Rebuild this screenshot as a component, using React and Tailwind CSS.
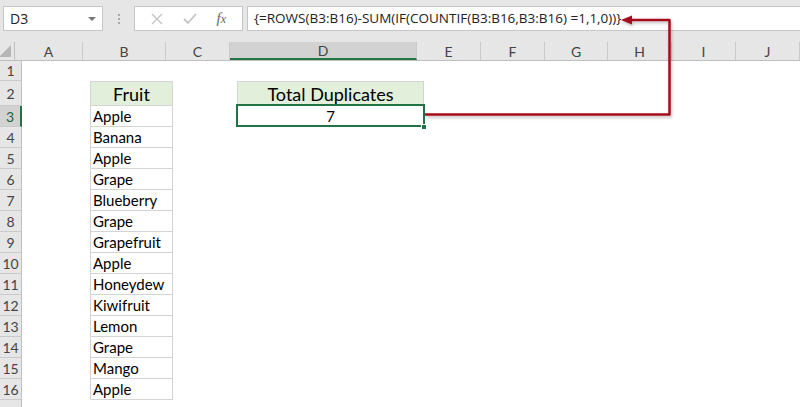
import React from 'react';

const colWidths = ['w-[68px]', 'w-[83px]', 'w-[64px]', 'w-[187px]', 'w-[64px]', 'w-[64px]', 'w-[63px]', 'w-[64px]', 'w-[64px]', 'w-[64px]'];
const colNames = ['A', 'B', 'C', 'D', 'E', 'F', 'G', 'H', 'I', 'J'];

const fruits = ['Apple', 'Banana', 'Apple', 'Grape', 'Blueberry', 'Grape', 'Grapefruit', 'Apple', 'Honeydew', 'Kiwifruit', 'Lemon', 'Grape', 'Mango', 'Apple'];

const rowHeights = ['h-[20px]', 'h-[25px]', ...Array(14).fill('h-[21px]'), 'h-[21px]'];

const font = { fontFamily: 'Lato, "Noto Sans", sans-serif' };

const Cell = ({ row, col }) => {
  // B column table
  if (col === 1 && row === 2) {
    return (
      <div className="h-full border border-[#d4d4d4] bg-[#e2efda] flex items-center justify-center text-[18px] text-black leading-none">
        Fruit
      </div>
    );
  }
  if (col === 1 && row >= 3 && row <= 16) {
    return (
      <div className="h-full border-x border-b border-[#d4d4d4] flex items-center pl-[2px] text-[15px] text-black leading-none">
        {fruits[row - 3]}
      </div>
    );
  }
  if (col === 3 && row === 2) {
    return (
      <div className="h-full border border-[#d4d4d4] bg-[#e2efda] flex items-center justify-center text-[18px] text-black leading-none">
        Total Duplicates
      </div>
    );
  }
  if (col === 3 && row === 3) {
    return (
      <div className="relative h-full flex items-center justify-center text-[15px] text-black leading-none">
        7
        <div className="absolute -top-[2px] -left-px -right-px bottom-0 border-2 border-[#217346]" />
        <div className="absolute -right-[3px] -bottom-[3px] w-[6px] h-[6px] bg-[#217346] border border-white" />
      </div>
    );
  }
  return null;
};

export default function App() {
  return (
    <div className="relative w-[800px] h-[407px] overflow-hidden bg-white" style={font}>
      {/* formula bar */}
      <div className="h-[42px] bg-[#e6e6e6] flex items-start pt-[6px] pl-[3px]">
        <div className="w-[100px] h-[25px] bg-white border border-[#c6c6c6] flex items-center justify-between px-[6px]" style={{ fontFamily: '"Open Sans", sans-serif' }}>
          <span className="text-[14px] text-[#222]">D3</span>
          <span className="w-0 h-0 border-x-[4px] border-x-transparent border-t-[4px] border-t-[#777]" />
        </div>
        <div className="w-[31px] h-[25px] flex flex-col items-center justify-center gap-[2px]">
          <span className="w-[2px] h-[2px] bg-[#aaa]" />
          <span className="w-[2px] h-[2px] bg-[#aaa]" />
          <span className="w-[2px] h-[2px] bg-[#aaa]" />
        </div>
        <div className="w-[109px] h-[25px] bg-white border border-[#c6c6c6] flex items-center justify-around px-[6px]">
          <svg width="12" height="12" viewBox="0 0 12 12">
            <path d="M1 1 L11 11 M11 1 L1 11" stroke="#c4c4c4" strokeWidth="1.4" />
          </svg>
          <svg width="14" height="12" viewBox="0 0 14 12">
            <path d="M1 6 L5 10 L13 1" stroke="#c4c4c4" strokeWidth="1.8" fill="none" />
          </svg>
          <span className="text-[15px] italic text-[#666] leading-none" style={{ fontFamily: '"Liberation Serif", serif' }}>
            f<span className="text-[12px]">x</span>
          </span>
        </div>
        <div className="ml-[4px] flex-1 h-[25px] bg-white border border-[#c6c6c6] border-r-0 flex items-center pl-[6px] text-[13.5px] text-[#222]" style={{ fontFamily: '"Open Sans", sans-serif' }}>
          {'{=ROWS(B3:B16)-SUM(IF(COUNTIF(B3:B16,B3:B16) =1,1,0))}'}
        </div>
      </div>

      {/* column headers */}
      <div className="flex h-[19px] bg-[#e6e6e6] border-b border-[#bfbfbf]">
        <div className="w-[22px] h-full relative border-r border-[#bfbfbf]">
          <div className="absolute right-[3px] bottom-[3px] w-0 h-0 border-l-[12px] border-l-transparent border-b-[12px] border-b-[#b6b6b6]" />
        </div>
        {colNames.map((c, i) => (
          <div
            key={c}
            className={`${colWidths[i]} shrink-0 h-full flex items-center justify-center text-[14px] text-[#444] border-r border-[#cacaca] ${i === 3 ? 'bg-[#d2d2d2] border-b-2 border-b-[#217346] text-[#1f5f3a]' : ''}`}
          >
            {c}
          </div>
        ))}
      </div>

      {/* rows */}
      {rowHeights.map((h, r) => {
        const row = r + 1;
        return (
          <div key={row} className={`flex ${h}`}>
            <div
              className={`w-[22px] shrink-0 h-full flex items-center justify-center text-[14px] border-b border-[#cacaca] ${row === 3 ? 'bg-[#d2d2d2] border-r-2 border-r-[#217346] text-[#1f5f3a]' : 'bg-[#e6e6e6] border-r border-r-[#bfbfbf] text-[#444]'}`}
            >
              {row <= 16 ? row : ''}
            </div>
            {colNames.map((c, i) => (
              <div key={c} className={`${colWidths[i]} shrink-0 h-full`}>
                <Cell row={row} col={i} />
              </div>
            ))}
          </div>
        );
      })}

      {/* callout arrow */}
      <svg className="absolute left-0 top-0 pointer-events-none" width="800" height="407">
        <defs>
          <filter id="sh" x="-10%" y="-10%" width="120%" height="130%">
            <feDropShadow dx="1" dy="2" stdDeviation="1.5" floodColor="#000" floodOpacity="0.25" />
          </filter>
        </defs>
        <g filter="url(#sh)">
          <path d="M425 114.5 H669.5 V20 H630" stroke="#a50d1d" strokeWidth="2.5" fill="none" strokeLinejoin="round" />
          <path d="M621 20 L632 15.5 L632 24.5 Z" fill="#a50d1d" />
        </g>
      </svg>
    </div>
  );
}
